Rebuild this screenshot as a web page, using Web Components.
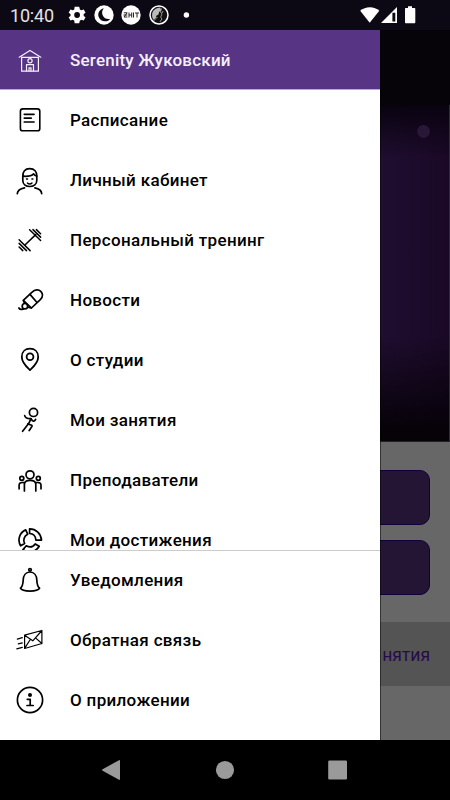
<!DOCTYPE html>
<html lang="ru">
<head>
<meta charset="utf-8">
<title>Serenity</title>
<style>
  body { margin: 0; font-family: Roboto, "Noto Sans", sans-serif; background: #000; }
</style>
</head>
<body>
<phone-screen>
  <status-bar slot="status" time="10:40"></status-bar>
  <studio-page slot="page">
    <studio-button></studio-button>
    <studio-button></studio-button>
    <span slot="link">нятия</span>
  </studio-page>
  <nav-drawer slot="drawer">
    <menu-item slot="header" icon="home" active>Serenity Жуковский</menu-item>
    <menu-item icon="schedule">Расписание</menu-item>
    <menu-item icon="profile">Личный кабинет</menu-item>
    <menu-item icon="dumbbell">Персональный тренинг</menu-item>
    <menu-item icon="news">Новости</menu-item>
    <menu-item icon="pin">О студии</menu-item>
    <menu-item icon="runner">Мои занятия</menu-item>
    <menu-item icon="people">Преподаватели</menu-item>
    <menu-item icon="ring">Мои достижения</menu-item>
    <menu-item slot="footer" icon="bell">Уведомления</menu-item>
    <menu-item slot="footer" icon="mail">Обратная связь</menu-item>
    <menu-item slot="footer" icon="info">О приложении</menu-item>
  </nav-drawer>
  <system-nav slot="nav"></system-nav>
</phone-screen>

<script>
const ICONS = {
  home: `<g stroke-width="1.2"><path d="M9.2 17.2 20 10.4l10.8 6.8"/><path d="M11.6 17v14.2h16.8V17M11.6 17.4h16.8"/><circle cx="20" cy="20.7" r="2.1"/><path d="M16.5 31v-6.3h7V31M19 31v-3.2h2V31"/></g>`,
  schedule: `<rect x="10.4" y="8.9" width="19.4" height="21.9" rx="2.4" stroke-width="1.6"/><path d="M14.3 14.3H24M14.3 18.1h6.9M14.3 22H24" stroke-width="1.7"/>`,
  profile: `<g stroke-width="1.7"><path d="M12.8 16.5c-.3-5 2.400-7.800 6.800-7.800 4.800 0 7.500 2.800 7.200 7.800v3.700c0 4-3.100 6.300-7.100 6.300s-6.900-2.300-6.900-6.300z"/><path d="M13 16.200c4.500.4 8.500-.2 10.600-2.300.8 1.300 1.700 2 3.200 2.300"/><path d="M7.300 33.600c.3-3.300 3.400-5 7.200-5.700M24.900 27.900c3.800.7 6.500 2.400 6.800 5.700"/></g><path d="M17.400 22.900c1.300 1.400 3.300 1.400 4.600 0" stroke-width="1.4"/><path d="M16.500 19h1M21.900 19h1" stroke-width="1.5"/>`,
  dumbbell: `<path d="M19.6 9.700 30.600 20.500M23 9.600l7.600 7.500M26.400 9.600l4.200 4.200M9.100 19.800l11 10.800M9.100 23.400l7.400 7.200M9.100 27l3.700 3.600M14.700 25.300l11-10.700" stroke-width="1.5"/>`,
  news: `<g stroke-width="1.7"><path d="M13.3 20.400l8.800-8.300c2.900-2.900 6.700-2.900 8.700-.8 2.300 2.500 2 5.800-.5 8.400L21.500 28z"/><path d="M20 14.400l6.800 7.800"/><path d="M13.500 20.800l1 2.400M21.200 28l-3.300-.9"/><circle cx="14.900" cy="26.200" r="2.700"/><path d="M8.900 28c.8 1.600 2.400 1.800 4.600 1"/></g>`,
  pin: `<path d="M20 30c-1.600-1.600-8.200-7-8.200-13.100 0-5.100 3.500-8.200 8.200-8.200s8.200 3.100 8.200 8.200c0 6.100-6.600 11.500-8.200 13.100z" stroke-width="1.8"/><circle cx="20" cy="16.7" r="3.4" stroke-width="1.8"/>`,
  runner: `<g stroke-width="1.7"><circle cx="23.5" cy="12.4" r="4.1"/><path d="M14.700 15.600c.5 2.300 2.500 3.200 6.200 3l1.700 2.300c1 .7 2.200.3 3-1.500"/><path d="M20.900 18.700c-1.200 3.800-2.800 5.700-4 7.100l-4.300 5.500"/><path d="M17.800 23.900l3.900 1.300c.5.3.5.7.2 1.300l-2.700 4"/></g>`,
  people: `<g stroke-width="1.7"><circle cx="20" cy="14.8" r="4"/><circle cx="11.8" cy="18.3" r="2"/><circle cx="28.3" cy="18.3" r="2"/><path d="M14.4 31v-6.600c0-3 2-4 5.700-4s5.700 1 5.700 4V31M9.100 28.800v-3.500c0-2 1.200-3.100 4.600-2.700M31 28.800v-3.500c0-2-1.200-3.100-4.600-2.700"/></g>`,
  ring: `<g stroke-width="1.7"><path d="M19.600 8.800v4.700c3.700.2 6 2.600 6.300 6.600h5.600c-.4-6.500-5.500-11.300-11.900-11.300z"/><path d="M15.700 9.900l2 4.300c-3.600 1.700-4.900 5.800-3.100 9.200l-4 2.400c-3.600-6.200-.8-13.400 5.100-15.900z"/><path d="M13 29.600l3.300-3.800c3.100 1.700 6.700 1.200 8.900-1.900l4 2.300c-3.700 6.400-10.900 7.300-16.200 3.400z"/></g>`,
  bell: `<g stroke-width="1.7"><circle cx="20" cy="9.8" r="1.3"/><path d="M20 12c-4 0-6.600 3.300-6.800 8-.2 4.200-.4 6.500-2.800 8.200 2 3.900 17.200 3.900 19.200 0-2.400-1.700-2.600-4-2.800-8.200-.2-4.700-2.800-8-6.800-8z"/></g>`,
  mail: `<path d="M14.600 15.200l17.300-4.700v13l-17.300 5z M14.600 15.200l8.200 5.600 9.100-10.300M14.600 28.300l5.700-8.800M31.900 23.500l-6.400-5.600M7.300 19.100l5-1.500M8.300 23.900l4-1M6.800 28.900l5.500-1.500" stroke-width="1.2"/>`,
  info: `<circle cx="20" cy="20" r="12.6" stroke-width="1.7"/><circle cx="20" cy="15" r="2" fill="currentColor" stroke="none"/><path d="M17.300 19.300h2.900v6M17 25.500h6.200" stroke-width="1.7"/>`
};

class PhoneScreen extends HTMLElement {
  constructor() {
    super();
    this.attachShadow({ mode: 'open' });
    this.shadowRoot.innerHTML = `
      <style>
        :host { display: grid; grid-template-rows: 30px 710px 60px; width: 450px; height: 800px; overflow: hidden; background: #000; }
        main { position: relative; display: grid; }
        ::slotted([slot="drawer"]) { position: absolute; inset: 0 auto 0 0; }
      </style>
      <slot name="status"></slot>
      <main>
        <slot name="page"></slot>
        <slot name="drawer"></slot>
      </main>
      <slot name="nav"></slot>
    `;
  }
}

class StatusBar extends HTMLElement {
  constructor() {
    super();
    this.attachShadow({ mode: 'open' });
    this.shadowRoot.innerHTML = `
      <style>
        :host { display: flex; align-items: center; justify-content: space-between; box-sizing: border-box; padding: 0 34px 0 10px; background: #0c0914; color: #fff; }
        .left { display: flex; align-items: center; gap: 7.4px; }
        .right { display: flex; align-items: center; }
        time { width: 49px; font-size: 18px; line-height: 30px; color: #e4e3e6; padding-top: 1px; letter-spacing: -.2px; }
        svg { display: block; }
      </style>
      <div class="left">
        <time></time>
        <svg width="20" height="20" viewBox="0 1 22 22" fill="#fff"><path d="M19.4 13a7.500 7.500 0 0 0 0-2l2.100-1.600-2-3.500-2.500 1a7.300 7.300 0 0 0-1.700-1L14.500 3h-5l-.4 2.900a7.300 7.300 0 0 0-1.700 1l-2.500-1-2 3.500L5 11a7.500 7.500 0 0 0 0 2l-2.100 1.600 2 3.500 2.500-1a7.300 7.300 0 0 0 1.700 1l.4 2.900h5l.8-2.900a7.300 7.300 0 0 0 1.700-1l2.500 1 2-3.500zM12.200 15.200a3.200 3.200 0 1 1 0-6.400 3.200 3.200 0 0 1 0 6.400z"/></svg>
        <svg width="20" height="20" viewBox="0 0 20 20"><circle cx="10" cy="10" r="9.7" fill="#fff"/><path d="M9.800 3.200C5.600 4 3.300 8.200 4.700 12c1.400 3.800 6 5.500 9.800 3.400.7-.4 1.200-.9 1.600-1.500-3.300.6-6-.6-7.300-3.400C7.600 7.900 8 5.300 9.800 3.200z" fill="#0c0914"/></svg>
        <svg width="20" height="20" viewBox="0 0 20 20"><circle cx="10" cy="10" r="9.7" fill="#fff"/><path d="M2.800 7.800h3.400L3 12h3.400M2.500 10h3.800M8 7.500v5M8 10h2.600M10.700 7.500v5M12.500 7.500v5M14 8h4M16 8v4.500" stroke="#222" stroke-width="1" fill="none"/></svg>
        <svg width="20" height="20" viewBox="0 0 20 20"><circle cx="10" cy="10" r="9" fill="#101010" stroke="#fff" stroke-width="1.5"/><path d="M11.300 2.600c-4.600.4-8 3-8.200 6.800-.2 2.200.5 4 1.500 5.300l2.400-1.900.3-2 2.200-1.200.6-2.600 2-1.700z" fill="#bbb"/><path d="M12.500 3.500l-1 3.500 1.500 2-1.300 3 1.200 2-2 3M4.500 16l4-4M14 6l-1 2" stroke="#ccc" stroke-width=".7" fill="none"/></svg>
        <svg width="20" height="20" viewBox="0 0 20 20"><circle cx="10.4" cy="10" r="2.7" fill="#fff"/></svg>
      </div>
      <div class="right">
        <svg width="56" height="20" viewBox="0 0 56 20" fill="#fff"><path d="M.2 5.800C5.300.9 14.500.9 19.300 5.800L9.700 17.700z"/><path d="M21 18 37 2v16zM32.400 7.800v8.700h2.900V7.800z" fill-rule="evenodd"/><path d="M46 3h2V1.300h4V3h2.300c.6 0 1 .4 1 1v13.300c0 .6-.4 1-1 1H46c-.6 0-1-.4-1-1V4c0-.6.4-1 1-1z"/></svg>
      </div>
    `;
  }

  connectedCallback() {
    this.shadowRoot.querySelector('time').textContent = this.getAttribute('time');
  }
}

class StudioPage extends HTMLElement {
  constructor() {
    super();
    this.attachShadow({ mode: 'open' });
    this.shadowRoot.innerHTML = `
      <style>
        :host { display: grid; grid-template-rows: 75px 337px 180px 64px 1fr; background: #676767; }
        header { background: #060309; }
        .hero {
          display: flex; justify-content: flex-end; box-sizing: border-box; padding: 20px 19px 0 0;
          border-right: 1px solid #2f2c34; border-bottom: 1px solid #222;
          background:
            linear-gradient(#090310 0%, rgba(9, 3, 16, 0) 16%, rgba(9, 3, 16, 0) 68%, #060208 97%),
            linear-gradient(90deg, #200e31 380px, #1a0826 450px);
        }
        .dot { width: 13px; height: 13px; border-radius: 50%; background: #281737; }
        .buttons { display: flex; flex-direction: column; gap: 15px; padding: 28px 20px 0; }
        .link { display: flex; align-items: center; justify-content: flex-end; padding: 2px 20px 0 0; background: #545454; color: #240d46; font-size: 17.5px; }
      </style>
      <header></header>
      <div class="hero"><div class="dot"></div></div>
      <div class="buttons"><slot></slot></div>
      <div class="link"><slot name="link"></slot></div>
    `;
  }
}

class StudioButton extends HTMLElement {
  constructor() {
    super();
    this.attachShadow({ mode: 'open' });
    this.shadowRoot.innerHTML = `
      <style>
        :host { display: block; box-sizing: border-box; height: 55px; border: 1px solid #11003a; border-radius: 10px; background: #241535; }
      </style>
      <slot></slot>
    `;
  }
}

class NavDrawer extends HTMLElement {
  constructor() {
    super();
    this.attachShadow({ mode: 'open' });
    this.shadowRoot.innerHTML = `
      <style>
        :host { display: grid; grid-template-rows: 60px 460px 190px; width: 380px; background: #fff; box-shadow: 1px 0 0 rgba(0, 0, 0, .5); }
        .header { box-sizing: border-box; border-bottom: 1px solid #b9abcb; background: #573584; height: 60px; }
        .list { overflow: hidden; }
        .footer { box-shadow: inset 0 1px 0 #ccc; }
      </style>
      <div class="header"><slot name="header"></slot></div>
      <div class="list"><slot></slot></div>
      <div class="footer"><slot name="footer"></slot></div>
    `;
  }
}

class MenuItem extends HTMLElement {
  constructor() {
    super();
    this.attachShadow({ mode: 'open' });
    this.shadowRoot.innerHTML = `
      <style>
        :host { display: flex; align-items: center; gap: 20px; height: 60px; padding-left: 10px; color: #000; font-size: 17px; font-weight: 500; letter-spacing: .33px; white-space: nowrap; }
        :host([active]) { color: #f4effa; letter-spacing: .22px; }
        svg { display: block; flex: none; }
      </style>
      <svg width="40" height="40" viewBox="0 0 40 40" fill="none" stroke="currentColor" stroke-linejoin="round" stroke-linecap="round"></svg>
      <div class="label"><slot></slot></div>
    `;
  }

  connectedCallback() {
    this.shadowRoot.querySelector('svg').innerHTML = ICONS[this.getAttribute('icon')] || '';
  }
}

class SystemNav extends HTMLElement {
  constructor() {
    super();
    this.attachShadow({ mode: 'open' });
    this.shadowRoot.innerHTML = `
      <style>
        :host { display: flex; justify-content: space-between; align-items: center; padding: 0 102px; background: #000; }
        svg { display: block; fill: #9a9a9a; }
      </style>
      <svg width="20" height="20" viewBox="0 0 20 20"><path d="M17 .2c.6-.3 1 0 1 .6v18.400c0 .6-.4.900-1 .6L.6 10.800c-.6-.4-.6-1.200 0-1.600z"/></svg>
      <svg width="20" height="20" viewBox="0 0 20 20"><circle cx="10" cy="10" r="9.1"/></svg>
      <svg width="20" height="20" viewBox="0 0 20 20"><rect x=".2" y=".6" width="18.8" height="18.8" rx="1.2"/></svg>
    `;
  }
}

customElements.define('phone-screen', PhoneScreen);
customElements.define('status-bar', StatusBar);
customElements.define('studio-page', StudioPage);
customElements.define('studio-button', StudioButton);
customElements.define('nav-drawer', NavDrawer);
customElements.define('menu-item', MenuItem);
customElements.define('system-nav', SystemNav);
</script>
</body>
</html>
